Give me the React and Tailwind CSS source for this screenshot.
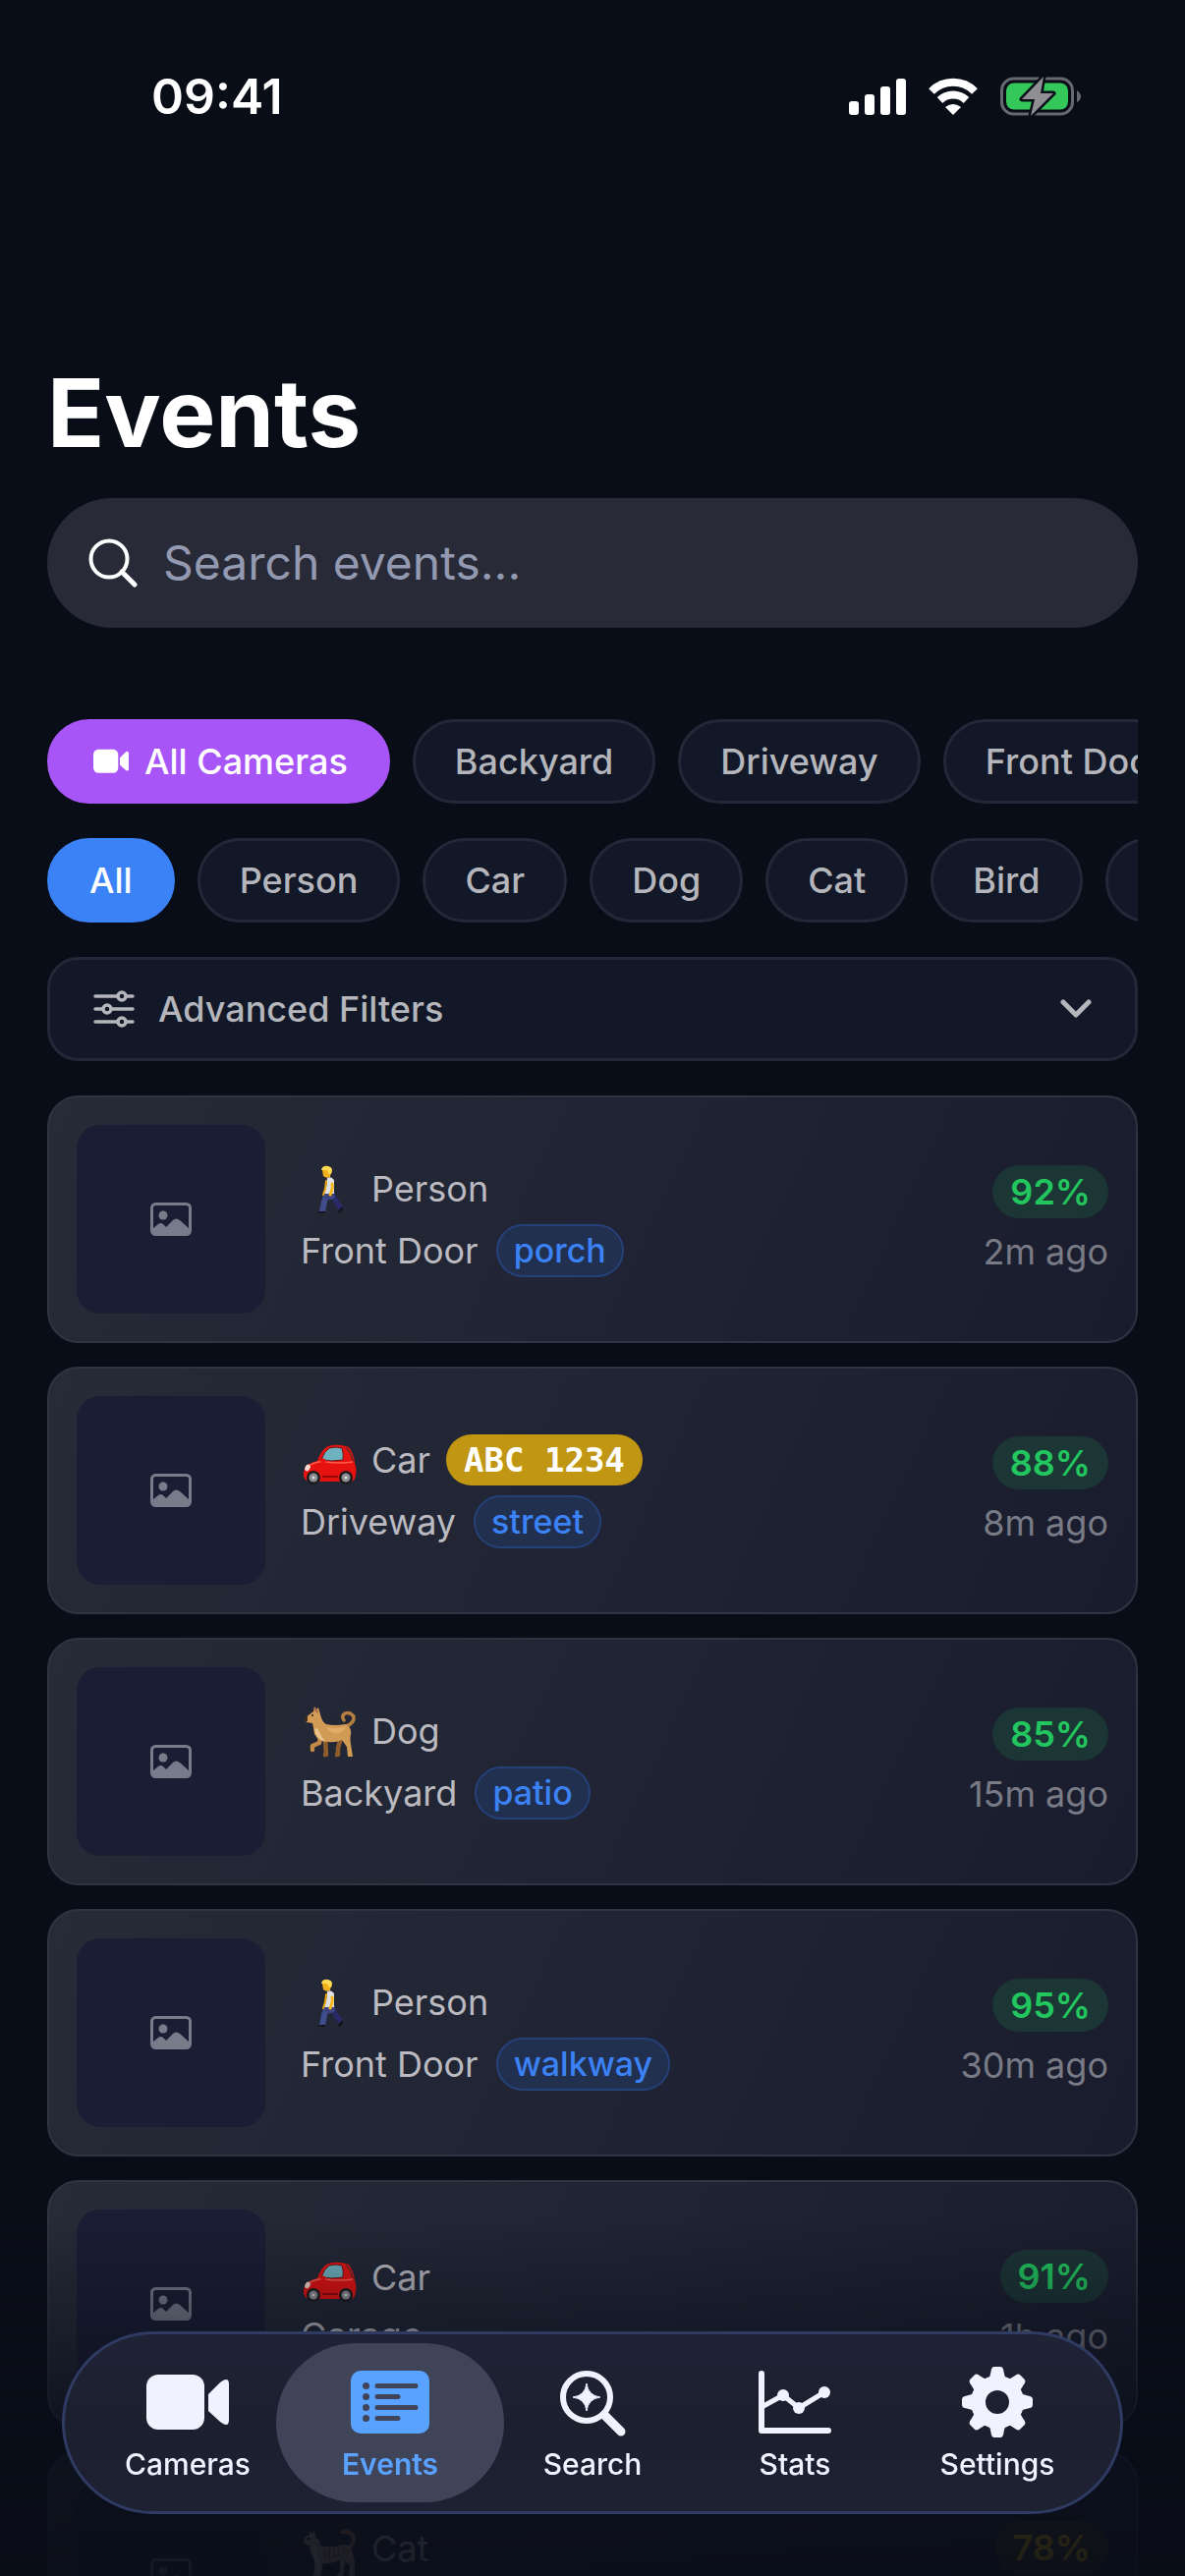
// App.jsx — Events screen (camera detections list)
// - search + camera / label chips + advanced filters
// - event cards with thumbnail, label, zone, confidence
// - floating tab bar at the bottom

import React, { useMemo, useState } from 'react';
import clsx from 'clsx';

const CAMERAS = ['All Cameras', 'Backyard', 'Driveway', 'Front Door'];
const LABELS = ['All', 'Person', 'Car', 'Dog', 'Cat', 'Bird', 'Package'];

const EVENTS = [
  { id: 1, label: 'Person', camera: 'Front Door', zone: 'porch', score: 92, ago: '2m ago' },
  { id: 2, label: 'Car', camera: 'Driveway', zone: 'street', plate: 'ABC 1234', score: 88, ago: '8m ago' },
  { id: 3, label: 'Dog', camera: 'Backyard', zone: 'patio', score: 85, ago: '15m ago' },
  { id: 4, label: 'Person', camera: 'Front Door', zone: 'walkway', score: 95, ago: '30m ago' },
  { id: 5, label: 'Car', camera: 'Garage', score: 91, ago: '1h ago' },
  { id: 6, label: 'Cat', camera: 'Backyard', score: 78, ago: '2h ago' },
];

/* ---------- status bar ---------- */

function StatusBar() {
  return (
    <div className="flex shrink-0 items-center justify-between pt-[68px] pl-[154px] pr-[106px]">
      <span className="text-[50px] leading-[60px] font-semibold">09:41</span>
      <div className="flex items-center gap-[22px]">
        <svg width="58" height="38" viewBox="0 0 58 38" fill="#fff" aria-hidden="true">
          <rect x="0" y="24" width="10" height="14" rx="3" />
          <rect x="16" y="17" width="10" height="21" rx="3" />
          <rect x="32" y="9" width="10" height="29" rx="3" />
          <rect x="48" y="1" width="10" height="37" rx="3" />
        </svg>
        <svg width="52" height="38" viewBox="0 0 52 38" aria-hidden="true">
          <path d="M4 14 A31 31 0 0 1 48 14" fill="none" stroke="#fff" strokeWidth="8" />
          <path d="M12.500 23 A19.500 19.500 0 0 1 39.500 23" fill="none" stroke="#fff" strokeWidth="8" />
          <path d="M18 30 Q26 24 34 30 L26 38 Z" fill="#fff" />
        </svg>
        <svg width="82" height="40" viewBox="0 0 82 40" aria-hidden="true">
          <rect x="1.500" y="2" width="72" height="36" rx="12" fill="none" stroke="#66686f" strokeWidth="3" />
          <path d="M78 14 Q82 17 82 20 Q82 24 78 26 Z" fill="#66686f" />
          <rect x="6" y="6.500" width="63" height="27" rx="8" fill="#34c759" />
          <path d="M44 0 L22 23 H35 L31 40 L54 17 H41 Z" fill="#8e8e93" stroke="#090d18" strokeWidth="5" strokeLinejoin="round" />
          <path d="M44 0 L22 23 H35 L31 40 L54 17 H41 Z" fill="#8e8e93" />
        </svg>
      </div>
    </div>
  );
}

/* ---------- small icons ---------- */

function CameraIcon({ className }) {
  return (
    <svg className={className} viewBox="0 0 84 64" fill="currentColor" aria-hidden="true">
      <rect x="0" y="4" width="59" height="56" rx="12" />
      <path d="M63 24 L75 12 Q84 5 84 14 V50 Q84 59 75 52 L63 41 Z" />
    </svg>
  );
}

function SearchIcon() {
  return (
    <svg width="50" height="50" viewBox="0 0 50 50" fill="none" stroke="#fff" strokeWidth="4" strokeLinecap="round" aria-hidden="true">
      <circle cx="21" cy="21" r="18.500" />
      <path d="M34 34 L47 47" strokeWidth="5" />
    </svg>
  );
}

function SlidersIcon() {
  return (
    <svg width="42" height="38" viewBox="0 0 42 38" fill="none" stroke="currentColor" strokeWidth="3.500" strokeLinecap="round" aria-hidden="true">
      <path d="M2 6 H24 M34 6 H40 M2 19 H9 M19 19 H40 M2 32 H24 M34 32 H40" />
      <circle cx="29" cy="6" r="4" />
      <circle cx="14" cy="19" r="4" />
      <circle cx="29" cy="32" r="4" />
    </svg>
  );
}

function ChevronIcon() {
  return (
    <svg width="32" height="20" viewBox="0 0 32 20" fill="none" stroke="currentColor" strokeWidth="5" strokeLinecap="round" strokeLinejoin="round" aria-hidden="true">
      <path d="M3 3 L16 16 L29 3" />
    </svg>
  );
}

function PhotoIcon() {
  return (
    <svg width="42" height="34" viewBox="0 0 42 34" aria-hidden="true">
      <rect x="1.500" y="1.500" width="39" height="31" rx="4" fill="none" stroke="#787b8a" strokeWidth="3" />
      <circle cx="13" cy="13" r="4.500" fill="#787b8a" />
      <path d="M2 27 L8 22 Q10.500 20 13 22 L16 25 L23 18 Q26 15 30 18 L40 27 V30 Q40 33 37 33 H5 Q2 33 2 30 Z" fill="#787b8a" />
    </svg>
  );
}

/* ---------- label drawings ---------- */

function PersonArt() {
  return (
    <>
      <path d="M31 31 L36 40 L42 48" stroke="#292a68" strokeWidth="5.500" fill="none" strokeLinejoin="round" />
      <path d="M27 31 L24 40 L22 51" stroke="#414c8c" strokeWidth="6" fill="none" strokeLinejoin="round" />
      <path d="M24 29 H34 L35 36 Q30 40 25 37 Z" fill="#3b447f" />
      <path d="M17 52 Q20 49 25 50 V52 Z" fill="#14151d" />
      <path d="M38 51 Q39 47 43 45 L43 49 L39 52 Z" fill="#14151d" />
      <path d="M27 16 Q31 14 34 18 V32 H24 Q27 24 27 16 Z" fill="#dfe1e8" />
      <path d="M26 19 L25 27 L23 33" stroke="#e9a60c" strokeWidth="2" fill="none" strokeLinecap="round" />
      <path d="M32 22 Q33 27 30 33" stroke="#f6b719" strokeWidth="3" fill="none" strokeLinecap="round" />
      <path d="M22 8 L23 14 Q26 17 30 15 L31 8 Z" fill="#f2b01c" />
      <path d="M21 8 Q22 3 28 4 Q34 5 31 12 L29 12 L27 8 Z" fill="#ffdb54" />
    </>
  );
}

function CarArt() {
  return (
    <>
      <path d="M3 39 Q4 31 17 28 Q21 16 28 13 Q38 10 49 14 Q54 20 55 30 Q58 38 55 46 Q54 49 50 49 H8 Q2 47 3 39 Z" fill="#e5120f" />
      <path d="M21 27 Q24 18 29 15 Q36 13 42 15 Q44 21 43 27 Q32 29 21 27 Z" fill="#6fb2bf" stroke="#6c1012" strokeWidth="1" />
      <path d="M46 15 Q51 18 53 28" stroke="#7d2528" strokeWidth="2" fill="none" />
      <path d="M6 34 Q16 28 25 29 Q40 31 53 29" stroke="#ff5d4d" strokeWidth="1.500" fill="none" />
      <path d="M22 44 H38" stroke="#970807" strokeWidth="2" />
      <ellipse cx="7" cy="35" rx="2.500" ry="3.500" fill="#f6d9cf" transform="rotate(30 7 35)" />
      <circle cx="23" cy="28" r="2.500" fill="#e5120f" />
      <circle cx="13" cy="45" r="7" fill="#1b1b1e" />
      <circle cx="46" cy="45" r="7" fill="#1b1b1e" />
      <circle cx="13" cy="45" r="4.500" fill="#8c8d92" />
      <circle cx="46" cy="45" r="4.500" fill="#8c8d92" />
      <circle cx="13" cy="45" r="1.500" fill="#dcdce0" />
      <circle cx="46" cy="45" r="1.500" fill="#dcdce0" />
    </>
  );
}

function DogArt() {
  return (
    <>
      <path d="M46 22 Q55 19 54 12 Q50 7 45 9 Q41 12 44 16" stroke="#b57f3f" strokeWidth="3.500" fill="none" strokeLinecap="round" />
      <path d="M25 34 L26 51 H23" stroke="#8f5c2c" strokeWidth="4.500" fill="none" strokeLinejoin="round" />
      <path d="M41 34 L38 44 L38 51 H35" stroke="#8f5c2c" strokeWidth="4.500" fill="none" strokeLinejoin="round" />
      <path d="M20 34 L19 39 L12 42 L12 46" stroke="#c48a48" strokeWidth="4.500" fill="none" strokeLinejoin="round" strokeLinecap="round" />
      <path d="M4 14 L9 10 L13 7 L14 2 L16 5 L18 3 L20 10 Q22 18 26 20 Q35 22 45 20 Q52 22 51 30 Q50 35 51 40 L53 53 H48 L47 43 L42 36 Q36 39 28 38 Q18 38 14 30 Q13 23 12 19 L6 18 Z" fill="#d19a55" />
      <path d="M14 25 Q16 36 25 38 Q20 31 17 24 Z" fill="#e9c389" />
      <path d="M26 23 Q36 26 46 22 Q44 28 38 29 Q30 30 26 23 Z" fill="#e0ae68" />
      <path d="M4 13 L7 12 L7 17 L4 17 Z" fill="#3d2a20" />
      <path d="M14 3 L17 8" stroke="#a86550" strokeWidth="2" />
      <circle cx="12" cy="11" r="1" fill="#241813" />
    </>
  );
}

function CatArt() {
  return (
    <>
      <path d="M42 10 Q52 9 54 16 Q55 22 49 26" stroke="#b07a5a" strokeWidth="4" fill="none" strokeLinecap="round" />
      <path d="M3 20 Q4 14 9 13 L9 9 L12 12 L14 9 L15 15 Q20 18 20 24 Q32 27 42 23 Q51 22 53 32 Q56 40 55 56 H49 L50 44 L45 40 L43 56 H36 L40 50 V39 Q30 43 23 42 L20 56 H11 L14 51 L14 38 Q8 30 9 24 Q4 24 3 20 Z" fill="#bfa793" />
      <path d="M24 26 L25 36 M29 27 V37 M34 26 V37 M39 25 L38 36 M44 25 L43 34 M49 27 L47 36" stroke="#a8694c" strokeWidth="2" />
      <path d="M14 26 Q14 36 18 42 L17 54" stroke="#ddd7d0" strokeWidth="4" fill="none" />
      <circle cx="8" cy="17" r="1.500" fill="#1d1a18" />
    </>
  );
}

const ART = { Person: PersonArt, Car: CarArt, Dog: DogArt, Cat: CatArt };

function LabelArt({ label }) {
  const Art = ART[label];
  return (
    <svg width="60" height="58" viewBox="0 -2 60 58" className="shrink-0" role="img" aria-label={label}>
      <Art />
    </svg>
  );
}

/* ---------- filters ---------- */

function Chip({ active, tone, icon, children, onClick }) {
  return (
    <button
      type="button"
      aria-pressed={active}
      onClick={onClick}
      className={clsx(
        'flex h-[86px] shrink-0 items-center gap-4 rounded-full border-[3px] px-10 text-[36px] font-medium whitespace-nowrap',
        !active && 'border-[#232737] bg-[#121827] text-[#b5b5bc]',
        active && tone === 'purple' && 'border-[#a855f7] bg-[#a855f7] text-white',
        active && tone === 'blue' && 'border-[#3b82f6] bg-[#3b82f6] text-white',
      )}
    >
      {icon}
      {children}
    </button>
  );
}

function ChipRow({ items, value, onChange, tone }) {
  return (
    <div className="flex gap-[23px] overflow-x-auto [scrollbar-width:none]">
      {items.map(item => (
        <Chip
          key={item}
          tone={tone}
          active={item === value}
          onClick={() => onChange(item)}
          icon={item === 'All Cameras' ? <CameraIcon className="ml-1 w-9" /> : null}
        >
          {item}
        </Chip>
      ))}
    </div>
  );
}

/* ---------- event card ---------- */

function EventCard({ event }) {
  return (
    <li className="flex items-center gap-9 rounded-[32px] border-2 border-[#2f3342] bg-linear-115 from-[#262b37] via-[#202434] to-[#191c2c] p-7">
      <div className="grid size-48 shrink-0 place-items-center rounded-3xl bg-[#1a1e34]">
        <PhotoIcon />
      </div>

      <div className="flex min-w-0 flex-1 flex-col gap-[9px] text-[36px] leading-[46px] text-[#babac0]">
        <div className="flex h-[54px] items-center gap-3">
          <LabelArt label={event.label} />
          <span>{event.label}</span>
          {event.plate && (
            <span className="ml-1 rounded-full bg-[#c19612] px-[18px] font-['DejaVu_Sans_Mono',monospace] text-[34px] leading-[52px] font-bold text-white">
              {event.plate}
            </span>
          )}
        </div>
        <div className="flex items-center gap-[18px]">
          <span>{event.camera}</span>
          {event.zone && (
            <span className="rounded-full border-2 border-[#254179] bg-[#22304f] px-4 text-[34px] leading-[50px] font-medium text-[#3b82f6]">
              {event.zone}
            </span>
          )}
        </div>
      </div>

      <div className="flex shrink-0 flex-col items-end gap-3">
        <span
          className={clsx(
            'rounded-full px-[18px] text-[36px] leading-[54px] font-semibold',
            event.score >= 80 ? 'bg-[#1c3535] text-[#22c55e]' : 'bg-[#3a3320] text-[#eab308]',
          )}
        >
          {event.score}%
        </span>
        <span className="text-[36px] leading-[44px] text-[#787a85]">{event.ago}</span>
      </div>
    </li>
  );
}

/* ---------- tab bar ---------- */

function ListTabIcon() {
  return (
    <svg width="80" height="72" viewBox="0 0 80 72" aria-hidden="true">
      <rect x="0" y="4" width="80" height="64" rx="10" fill="currentColor" />
      <g stroke="#404459" strokeWidth="5" strokeLinecap="round">
        <path d="M27 19.500 H66 M27 30.500 H48 M27 41.500 H66 M27 52.500 H48" />
      </g>
      <g fill="#404459">
        <circle cx="15.500" cy="19.500" r="3.500" />
        <circle cx="15.500" cy="30.500" r="3.500" />
        <circle cx="15.500" cy="41.500" r="3.500" />
        <circle cx="15.500" cy="52.500" r="3.500" />
      </g>
    </svg>
  );
}

function SparkSearchTabIcon() {
  return (
    <svg width="68" height="72" viewBox="0 0 68 72" fill="none" stroke="currentColor" aria-hidden="true">
      <circle cx="28" cy="31" r="24" strokeWidth="6" />
      <path d="M46 49 L63 66" strokeWidth="9" strokeLinecap="round" />
      <path d="M28 17 Q29.500 29.500 42 31 Q29.500 32.500 28 45 Q26.500 32.500 14 31 Q26.500 29.500 28 17 Z" fill="currentColor" strokeWidth="1" strokeLinejoin="round" />
    </svg>
  );
}

function ChartTabIcon() {
  return (
    <svg width="74" height="72" viewBox="0 0 74 72" fill="none" stroke="currentColor" strokeLinecap="round" strokeLinejoin="round" aria-hidden="true">
      <path d="M3 7 V65 H71" strokeWidth="6" />
      <path d="M5 40 L25 29 L41 42 L67 26" strokeWidth="5" />
      <g fill="currentColor" stroke="none">
        <circle cx="25" cy="29" r="6" />
        <circle cx="41" cy="42" r="6" />
        <circle cx="67" cy="26" r="6" />
      </g>
    </svg>
  );
}

function GearTabIcon() {
  return (
    <svg width="72" height="72" viewBox="0 0 72 72" fill="currentColor" aria-hidden="true">
      <circle cx="36" cy="36" r="19.500" fill="none" stroke="currentColor" strokeWidth="15" />
      {[0, 45, 90, 135, 180, 225, 270, 315].map(deg => (
        <path key={deg} d="M26 13 Q29 10 29.500 5 Q30 0 33 0 H39 Q42 0 42.500 5 Q43 10 46 13 Z" transform={`rotate(${deg} 36 36)`} />
      ))}
    </svg>
  );
}

const TABS = [
  { name: 'Cameras', icon: <CameraIcon className="w-[84px]" /> },
  { name: 'Events', icon: <ListTabIcon /> },
  { name: 'Search', icon: <SparkSearchTabIcon /> },
  { name: 'Stats', icon: <ChartTabIcon /> },
  { name: 'Settings', icon: <GearTabIcon /> },
];

function TabBar({ tab, onChange }) {
  return (
    <nav className="fixed inset-x-[63px] bottom-[63px] z-20 flex rounded-full border-[3px] border-[#303b63] bg-linear-to-b from-[#1f2336] via-[#1c1f2e] to-[#1d2132] px-[22px] py-[9px]">
      {TABS.map(({ name, icon }) => {
        const active = name === tab;
        return (
          <button
            key={name}
            type="button"
            aria-current={active ? 'page' : undefined}
            onClick={() => onChange(name)}
            className={clsx('relative flex h-[162px] flex-1 flex-col items-center gap-[7px] pt-6', active ? 'text-[#5aa2ff]' : 'text-[#f0f3ff]')}
          >
            {active && <span className="absolute -inset-x-[13px] inset-y-0 rounded-full bg-[#404459]" />}
            <span className="relative flex h-[72px] items-center">{icon}</span>
            <span className={clsx('relative text-[30px] leading-10', active ? 'font-semibold' : 'font-medium')}>{name}</span>
          </button>
        );
      })}
    </nav>
  );
}

/* ---------- screen ---------- */

export default function App() {
  const [search, setSearch] = useState('');
  const [camera, setCamera] = useState('All Cameras');
  const [label, setLabel] = useState('All');
  const [tab, setTab] = useState('Events');

  // apply filters
  const filtered = useMemo(() => {
    const q = search.trim().toLowerCase();
    return EVENTS.filter(e => {
      if (camera !== 'All Cameras' && e.camera !== camera) return false;
      if (label !== 'All' && e.label !== label) return false;
      return !q || `${e.label} ${e.camera} ${e.zone || ''}`.toLowerCase().includes(q);
    });
  }, [search, camera, label]);

  return (
    <div className="flex h-screen flex-col bg-[#090d18] font-['Inter',sans-serif] text-white">
      <StatusBar />

      <main className="min-h-0 flex-1 overflow-y-auto px-12 pt-[232px] [scrollbar-width:none]">
        <h1 className="text-[96px] leading-[120px] font-bold">Events</h1>

        <label className="mt-[27px] flex h-[132px] items-center gap-[26px] rounded-full bg-[#282b37] px-[42px]">
          <SearchIcon />
          <input
            type="text"
            aria-label="Search events"
            value={search}
            onChange={e => setSearch(e.target.value)}
            placeholder="Search events..."
            className="min-w-0 flex-1 bg-transparent text-[48px] outline-none placeholder:text-[#9299b0]"
          />
        </label>

        {/* filters */}
        <div className="mt-[93px] flex flex-col gap-[35px]">
          <ChipRow items={CAMERAS} value={camera} onChange={setCamera} tone="purple" />
          <ChipRow items={LABELS} value={label} onChange={setLabel} tone="blue" />

          <button type="button" className="flex h-[106px] items-center gap-6 rounded-[32px] border-[3px] border-[#232737] bg-[#121827] px-11 text-[36px] font-medium text-[#b5b5bc]">
            <SlidersIcon />
            <span className="flex-1 text-left">Advanced Filters</span>
            <ChevronIcon />
          </button>

          {/* list */}
          <ul className="flex flex-col gap-6 pb-72">
            {filtered.map(e => <EventCard key={e.id} event={e} />)}
          </ul>
        </div>
      </main>

      {/* fade under the tab bar */}
      <div className="pointer-events-none fixed inset-x-0 bottom-0 z-10 h-[360px] bg-linear-to-b from-transparent via-[#090d18]/80 via-60% to-[#090d18]/90" />
      <TabBar tab={tab} onChange={setTab} />
    </div>
  );
}
